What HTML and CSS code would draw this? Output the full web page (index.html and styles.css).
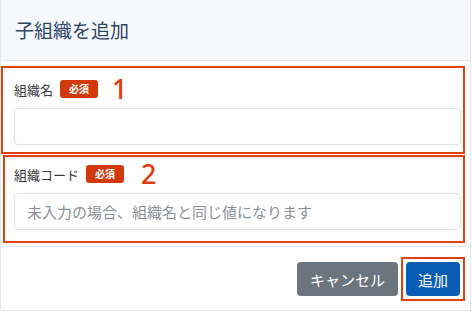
FILE: index.html
```html
<!DOCTYPE html>
<html lang="ja">
<head>
  <meta charset="UTF-8" />
  <title>子組織を追加</title>
  <link rel="stylesheet" href="styles.css">
</head>
<body>

<div class="dialog">
  <div class="dialog-header">
    <h2>子組織を追加</h2>
  </div>

  <div class="dialog-body">
    <div class="field mark mark-1">
      <div class="label-row">
        <label>組織名</label>
        <span class="required">必須</span>
        <span class="num">1</span>
      </div>
      <input type="text">
    </div>

    <div class="field mark mark-2">
      <div class="label-row">
        <label>組織コード</label>
        <span class="required">必須</span>
        <span class="num">2</span>
      </div>
      <input type="text" placeholder="未入力の場合、組織名と同じ値になります">
    </div>
  </div>

  <div class="dialog-footer">
    <button class="btn btn-cancel">キャンセル</button>
    <span class="mark btn-mark">
      <button class="btn btn-add">追加</button>
    </span>
  </div>
</div>

</body>
</html>
```

FILE: styles.css
```css
* { margin: 0; padding: 0; box-sizing: border-box; }
body {
  font-family: "Noto Sans CJK JP", "Noto Sans", sans-serif;
  background: #fff;
  color: #333;
}
.dialog {
  width: 471px;
  height: 311px;
  border: 1px solid #e4e7eb;
  border-top: none;
  display: flex;
  flex-direction: column;
}
.dialog-header {
  height: 61px;
  background: #f7f8fb;
  border-bottom: 1px solid #e3e6ea;
  display: flex;
  align-items: center;
  padding-left: 14px;
}
.dialog-header h2 {
  font-size: 19px;
  font-weight: 400;
  color: #2d4668;
  margin-top: -1px;
}
.dialog-body {
  padding: 5px 5px 0 0;
  display: flex;
  flex-direction: column;
  gap: 1px;
}
.mark {
  border: 2px solid #e0410f;
}
.field {
  padding: 10px 2px 0 11px;
}
.mark-1 { height: 88px; }
.mark-2 { height: 88px; margin-left: 2px; padding-left: 9px; padding-top: 6px; }
.label-row {
  display: flex;
  align-items: center;
  height: 22px;
  margin-bottom: 8px;
}
.label-row label {
  font-size: 13px;
  color: #3a3a3a;
}
.required {
  background: #d33a0b;
  color: #fff;
  font-size: 10px;
  font-weight: 700;
  border-radius: 3px;
  padding: 0 9px;
  height: 18px;
  line-height: 18px;
  margin-left: 7px;
}
.num {
  font-family: "Noto Sans", sans-serif;
  font-size: 27px;
  font-weight: 500;
  color: #df3d0c;
  margin-left: 14px;
  line-height: 22px;
}
.mark-2 .num { margin-left: 17px; }
input[type="text"] {
  display: block;
  width: 447px;
  height: 37px;
  border: 1px solid #dde2e8;
  border-radius: 4px;
  padding: 0 12px;
  font-family: inherit;
  font-size: 15px;
  color: #333;
  outline: none;
}
input::placeholder {
  color: #8b9097;
}
.dialog-footer {
  margin-top: 3px;
  border-top: 1px solid #e3e6ea;
  flex: 1;
  display: flex;
  justify-content: flex-end;
  align-items: flex-start;
  gap: 3px;
  padding: 10px 5px 0 0;
}
.btn {
  height: 34px;
  border: none;
  border-radius: 4px;
  color: #fff;
  font-family: inherit;
  font-size: 15px;
  padding: 0 13px;
}
.btn-cancel {
  background: #6c757d;
  width: 101px;
  margin-top: 5px;
}
.btn-mark {
  display: block;
  padding: 3px;
}
.btn-add {
  display: block;
  background: #0b5cb6;
  width: 54px;
  padding: 0;
}
```
